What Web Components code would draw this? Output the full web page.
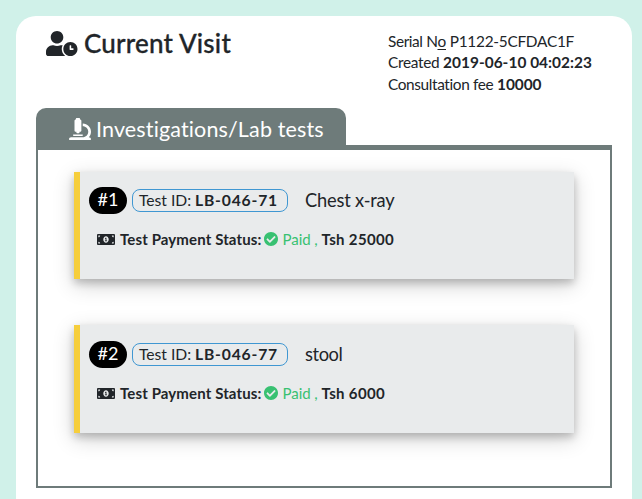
<!DOCTYPE html>
<html lang="en">
<head>
<meta charset="utf-8">
<title>Current Visit</title>
<style>
html, body { margin: 0; height: 100%; overflow: hidden; }
body { background: #d0f1e9; font-family: Lato, "Noto Sans", sans-serif; color: #212529; }
</style>
</head>
<body>
<visit-page></visit-page>
<script>
const ICONS = {
  'user-clock': ['0 0 640 512', 'M496 224c-79.6 0-144 64.4-144 144s64.4 144 144 144 144-64.4 144-144-64.4-144-144-144zm64 150.3c0 5.3-4.4 9.7-9.7 9.7h-60.6c-5.3 0-9.7-4.4-9.7-9.7v-76.6c0-5.3 4.4-9.7 9.7-9.7h12.6c5.3 0 9.7 4.4 9.7 9.7V352h38.3c5.3 0 9.7 4.4 9.7 9.7v12.6zM320 368c0-27.8 6.7-54.1 18.2-77.5-8-1.5-16.2-2.5-24.6-2.5h-16.7c-22.2 10.2-46.9 16-72.9 16s-50.6-5.8-72.9-16h-16.7C60.2 288 0 348.2 0 422.4V464c0 26.5 21.5 48 48 48h347.1c-45.3-31.9-75.1-84.5-75.1-144zm-96-112c70.7 0 128-57.3 128-128S294.7 0 224 0 96 57.3 96 128s57.3 128 128 128z'],
  'microscope': ['0 0 512 512', 'M160 320h12v16c0 8.84 7.16 16 16 16h40c8.84 0 16-7.16 16-16v-16h12c17.67 0 32-14.33 32-32V64c0-17.67-14.33-32-32-32V16c0-8.84-7.16-16-16-16h-64c-8.84 0-16 7.16-16 16v16c-17.67 0-32 14.33-32 32v224c0 17.67 14.33 32 32 32zm304 128h-1.29C493.24 413.99 512 369.2 512 320c0-105.88-86.12-192-192-192v64c70.58 0 128 57.42 128 128s-57.42 128-128 128H48c-26.51 0-48 21.49-48 48 0 8.84 7.16 16 16 16h480c8.84 0 16-7.16 16-16 0-26.51-21.49-48-48-48zm-360-32h208c4.42 0 8-3.58 8-8v-16c0-4.42-3.58-8-8-8H104c-4.42 0-8 3.58-8 8v16c0 4.42 3.58 8 8 8z'],
  'money': ['0 64 640 384', 'M352 288h-16v-88c0-4.42-3.58-8-8-8h-13.58c-4.74 0-9.37 1.4-13.31 4.03l-15.33 10.22a7.994 7.994 0 0 0-2.22 11.09l8.88 13.31a7.994 7.994 0 0 0 11.09 2.22l.47-.31V288h-16c-4.42 0-8 3.58-8 8v16c0 4.42 3.58 8 8 8h64c4.42 0 8-3.58 8-8v-16c0-4.42-3.58-8-8-8zM608 64H32C14.33 64 0 78.33 0 96v320c0 17.67 14.33 32 32 32h576c17.67 0 32-14.33 32-32V96c0-17.67-14.33-32-32-32zM48 400v-64c35.35 0 64 28.65 64 64H48zm0-224v-64h64c0 35.35-28.65 64-64 64zm272 192c-53.02 0-96-50.15-96-112 0-61.86 42.98-112 96-112s96 50.13 96 112c0 61.87-43 112-96 112zm272 32h-64c0-35.35 28.65-64 64-64v64zm0-224c-35.35 0-64-28.65-64-64h64v64z'],
  'check': ['8 8 496 496', 'M504 256c0 136.967-111.033 248-248 248S8 392.967 8 256 119.033 8 256 8s248 111.033 248 248zM227.314 387.314l184-184c6.248-6.248 6.248-16.379 0-22.627l-22.627-22.627c-6.248-6.249-16.379-6.249-22.628 0L216 308.118l-70.059-70.059c-6.248-6.248-16.379-6.248-22.628 0l-22.627 22.627c-6.248 6.248-6.248 16.379 0 22.627l104 104c6.249 6.249 16.379 6.249 22.628.001z']
};

customElements.define('glyph-icon', class extends HTMLElement {
  connectedCallback() {
    const [box, d] = ICONS[this.getAttribute('name')];
    this.attachShadow({ mode: 'open' }).innerHTML =
      `<style>:host{display:block;flex:none}svg{display:block;width:100%;height:100%;fill:currentColor}</style>
       <svg viewBox="${box}"><path d="${d}"/></svg>`;
  }
});

/* A run of text tracked so that it fills the given width. */
customElements.define('tracked-text', class extends HTMLElement {
  connectedCallback() {
    const root = this.attachShadow({ mode: 'open' });
    root.innerHTML = `<style>
      :host{display:block;flex:none;white-space:pre}
      span{display:inline-block}
      :host([underline]) span{text-decoration:underline;text-decoration-thickness:1px;text-underline-offset:2px}
    </style><span></span>`;
    const span = root.querySelector('span');
    span.textContent = this.getAttribute('text');
    const target = parseFloat(this.getAttribute('w'));
    const natural = span.getBoundingClientRect().width;
    span.style.letterSpacing = (target - natural) / span.textContent.length + 'px';
    this.style.width = target + 'px';
  }
});

customElements.define('visit-header', class extends HTMLElement {
  connectedCallback() {
    this.attachShadow({ mode: 'open' }).innerHTML = `<style>
      :host{display:flex;height:92px;box-sizing:border-box}
      .title{display:flex;width:342px;padding:12px 0 0 10px;box-sizing:border-box;font-size:26px;line-height:31px;font-weight:500;-webkit-text-stroke:.3px currentColor}
      glyph-icon{width:31.5px;height:25.2px;margin:3px 6.5px 0 0}
      .meta{display:flex;flex-direction:column;margin:14.8px 0 0 10px;font-size:15.4px;line-height:21.5px}
      .row{display:flex}
      b{font-weight:700}
    </style>
    <div class="title"><glyph-icon name="user-clock"></glyph-icon><tracked-text w="147" text="Current Visit"></tracked-text></div>
    <div class="meta">
      <div class="row"><tracked-text w="49.5" text="Serial N"></tracked-text><tracked-text underline w="8.5" text="o"></tracked-text><tracked-text w="128" text=" P1122-5CFDAC1F"></tracked-text></div>
      <div class="row"><tracked-text w="55" text="Created "></tracked-text><b><tracked-text w="149" text="2019-06-10 04:02:23"></tracked-text></b></div>
      <div class="row"><tracked-text w="109" text="Consultation fee "></tracked-text><b><tracked-text w="44.5" text="10000"></tracked-text></b></div>
    </div>`;
  }
});

customElements.define('lab-test', class extends HTMLElement {
  connectedCallback() {
    const a = n => this.getAttribute(n);
    this.attachShadow({ mode: 'open' }).innerHTML = `<style>
      :host{display:block;height:108px;box-sizing:border-box;background:#e9ebec;border-left:6px solid #f6ce3c;padding:15px 0 0 9px;box-shadow:0 4px 8px rgba(0,0,0,.2),0 6px 20px rgba(0,0,0,.19)}
      :host(:first-child){height:107px;padding-top:14px}
      .top{display:flex;align-items:center;height:28px}
      .num{width:38px;height:27px;box-sizing:border-box;padding-left:8.5px;border-radius:14px;background:#000;color:#fff;font-size:18px;line-height:25px}
      .chip{display:flex;width:156px;height:23px;box-sizing:border-box;margin:1px 17px 0 5px;padding-left:6px;border:1px solid #3f97d2;border-radius:8px;font-size:15.7px;line-height:20px}
      .name{font-size:18.3px;line-height:27px}
      .status{display:flex;align-items:center;margin:15px 0 0 8px;height:20px;font-size:15px;line-height:20px}
      .bill{width:18px;height:11px;margin-right:5px}
      .ok{width:14px;height:14px;margin:0 4.5px 0 2.5px}
      .paid{color:#38c172}
      b{font-weight:700}
    </style>
    <div class="top">
      <div class="num"><tracked-text w="21" text="#${a('no')}"></tracked-text></div>
      <div class="chip"><tracked-text w="56" text="Test ID: "></tracked-text><b><tracked-text w="83" text="${a('code')}"></tracked-text></b></div>
      <tracked-text class="name" w="${a('name-w')}" text="${a('name')}"></tracked-text>
    </div>
    <div class="status">
      <glyph-icon class="bill" name="money"></glyph-icon>
      <b><tracked-text w="141.5" text="Test Payment Status:"></tracked-text></b>
      <glyph-icon class="ok paid" name="check"></glyph-icon>
      <tracked-text class="paid" w="39" text="Paid , "></tracked-text>
      <b><tracked-text w="${a('fee-w')}" text="${a('fee')}"></tracked-text></b>
    </div>`;
  }
});

customElements.define('tab-panel', class extends HTMLElement {
  connectedCallback() {
    this.attachShadow({ mode: 'open' }).innerHTML = `<style>
      :host{display:block}
      .tab{display:flex;width:310px;height:37px;box-sizing:border-box;padding:9px 0 0 33px;background:#6e7b7a;color:#fff;border-radius:10px 10px 0 0;font-size:21.5px;line-height:25px}
      glyph-icon{width:22px;height:22px;margin:1px 5px 0 0}
      .body{display:flex;flex-direction:column;gap:46px;height:343px;box-sizing:border-box;border:2px solid #6e7b7a;border-top-width:5px;padding:22px 36px 0}
    </style>
    <div class="tab"><glyph-icon name="microscope"></glyph-icon><tracked-text w="228.5" text="Investigations/Lab tests"></tracked-text></div>
    <div class="body"><slot></slot></div>`;
  }
});

customElements.define('visit-page', class extends HTMLElement {
  connectedCallback() {
    this.attachShadow({ mode: 'open' }).innerHTML = `<style>
      :host{display:block;height:100vh;box-sizing:border-box;padding:16px 10px 0 16px}
      main{height:100%;box-sizing:border-box;padding:0 20px;background:#fff;border-radius:20px 20px 0 0}
    </style>
    <main>
      <visit-header></visit-header>
      <tab-panel>
        <lab-test no="1" code="LB-046-71" name="Chest x-ray" name-w="89.5" fee="Tsh 25000" fee-w="72.5"></lab-test>
        <lab-test no="2" code="LB-046-77" name="stool" name-w="37.5" fee="Tsh 6000" fee-w="63.5"></lab-test>
      </tab-panel>
    </main>`;
  }
});
</script>
</body>
</html>
